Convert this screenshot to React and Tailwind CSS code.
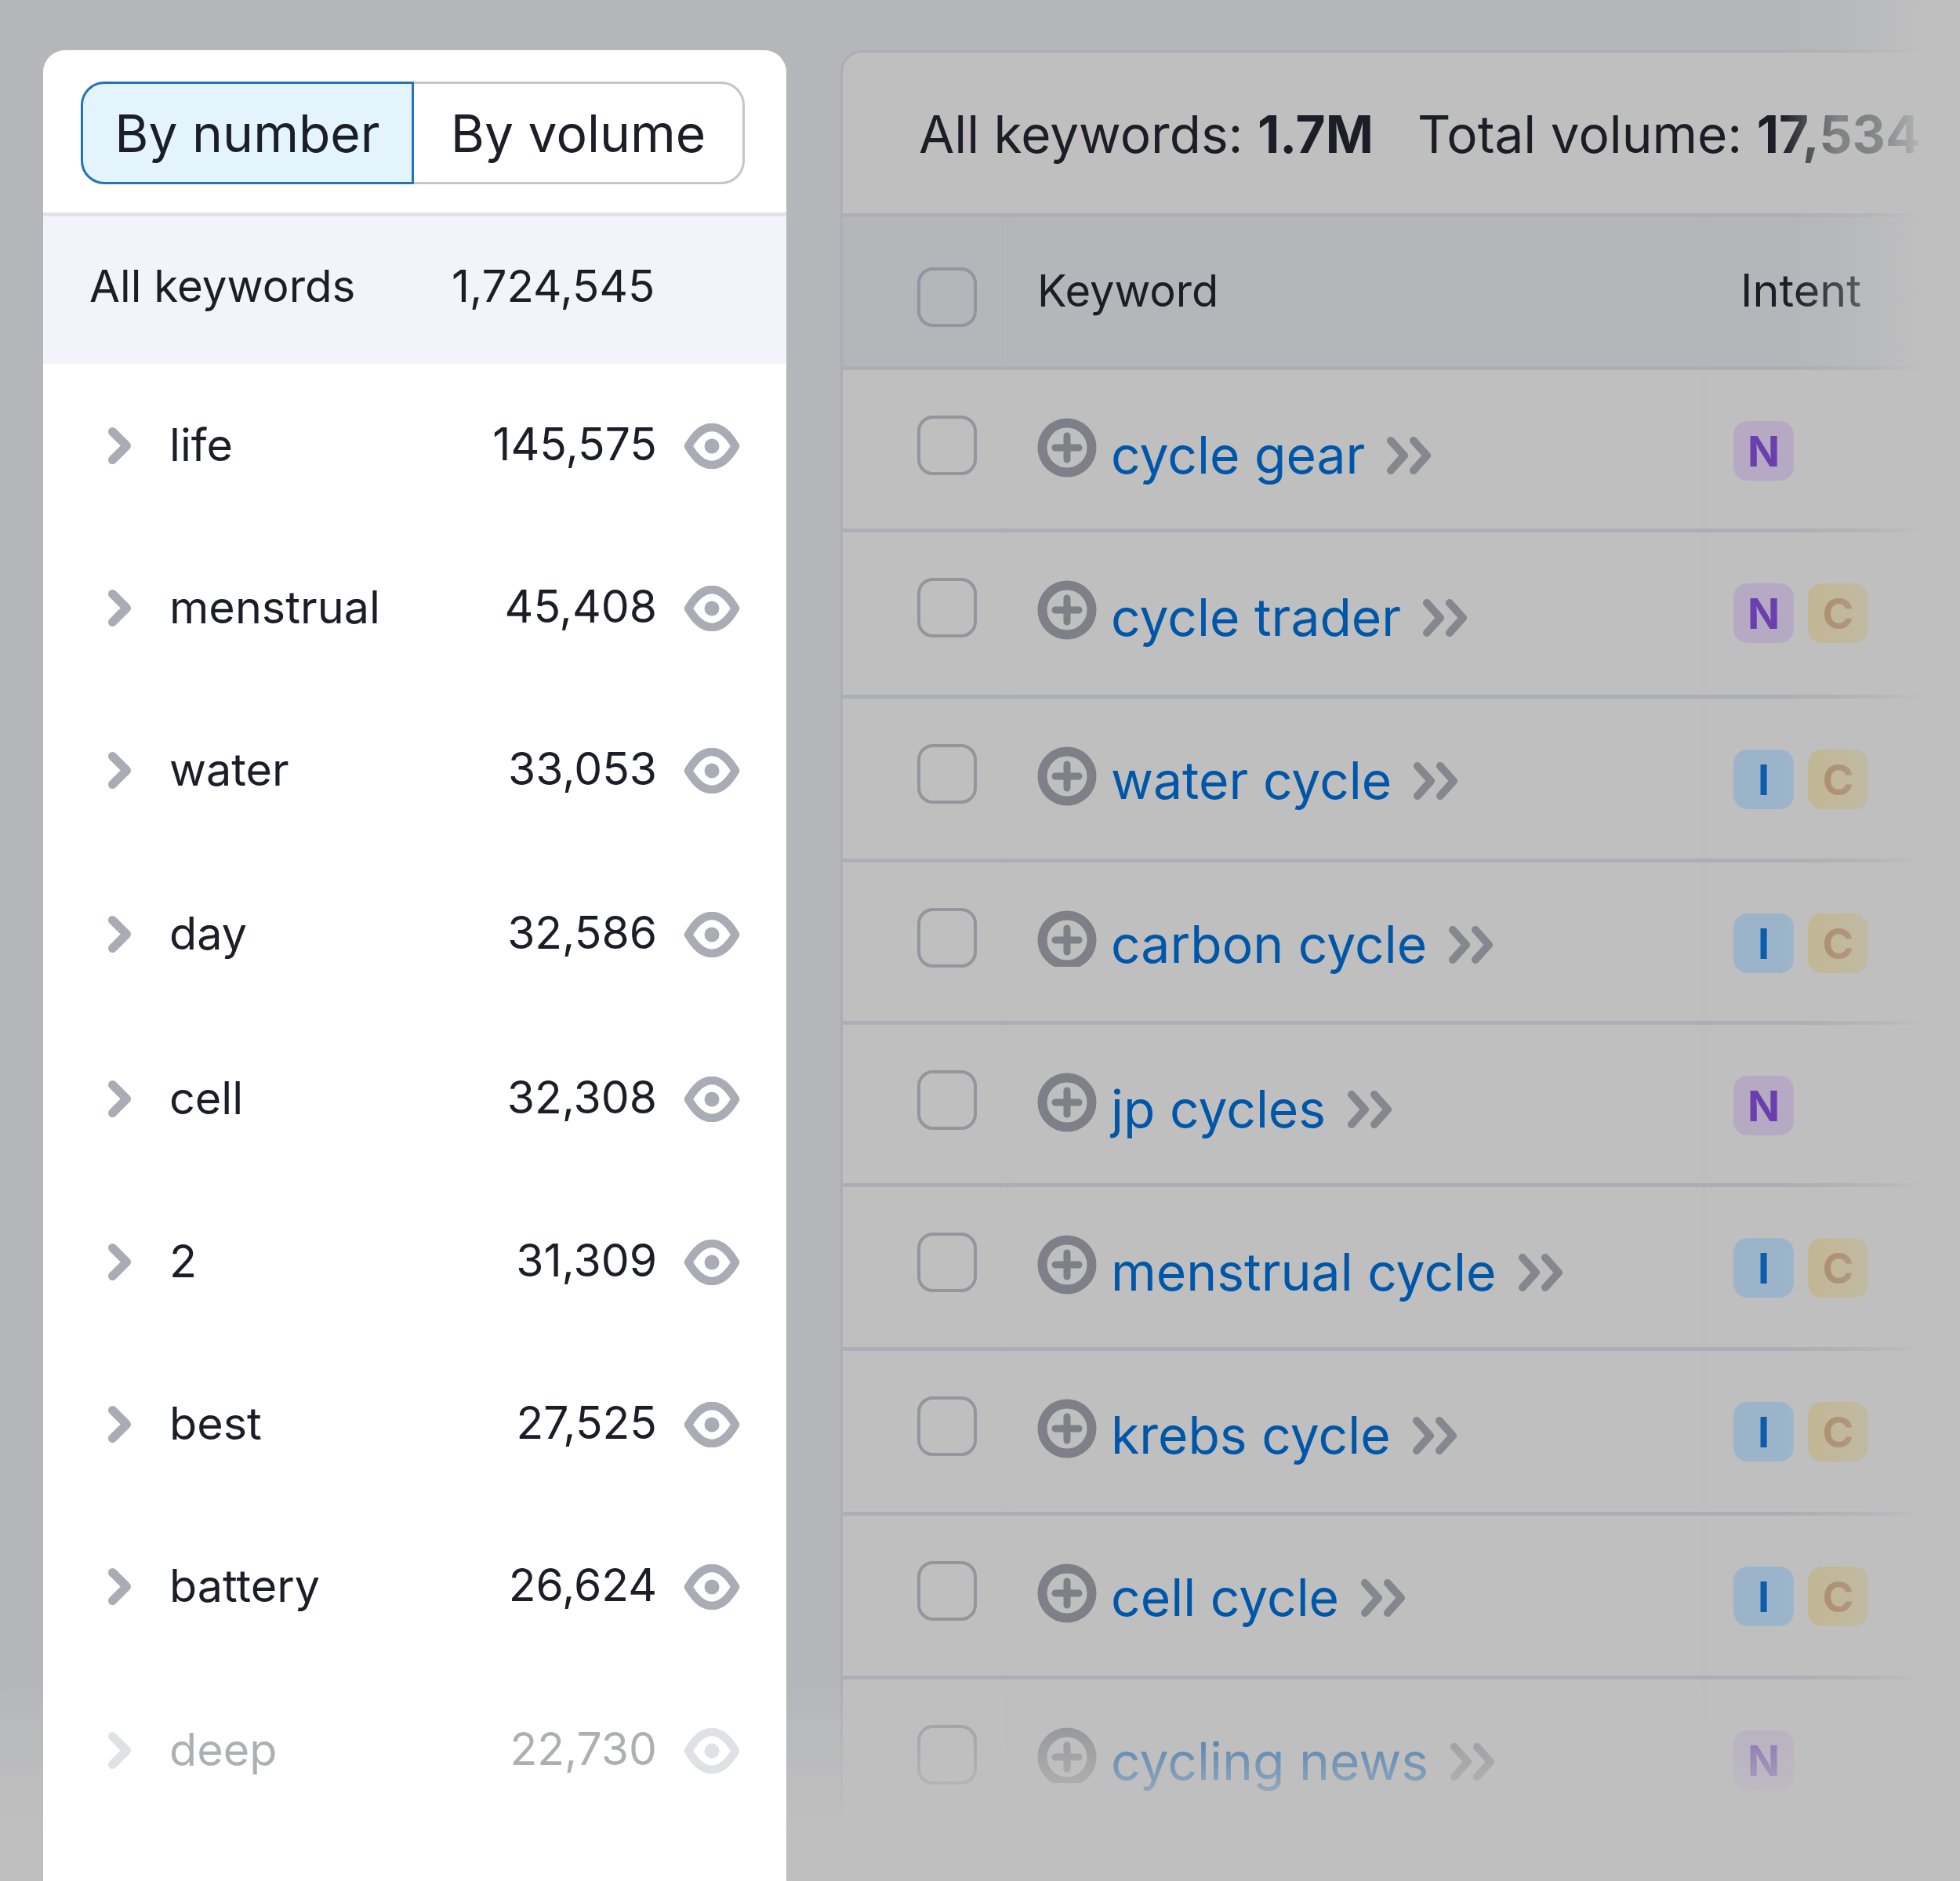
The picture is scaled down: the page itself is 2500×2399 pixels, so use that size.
const leftRows = [
  ["life", "145,575", "h-[207px]", ""],
  ["menstrual", "45,408", "h-[207px]", ""],
  ["water", "33,053", "h-[207px]", ""],
  ["day", "32,586", "h-[211px]", ""],
  ["cell", "32,308", "h-[209px]", ""],
  ["2", "31,309", "h-[207px]", ""],
  ["best", "27,525", "h-[207px]", ""],
  ["battery", "26,624", "h-[207px]", ""],
  ["deep", "22,730", "h-[211px]", "opacity-35"],
];

const rightRows = [
  ["cycle gear", ["N"], "h-[207px]", "", "mt-[2px]"],
  ["cycle trader", ["N", "C"], "h-[212px]", "", "mt-[2px]"],
  ["water cycle", ["I", "C"], "h-[209px]", "", "-mt-[2px]"],
  ["carbon cycle", ["I", "C"], "h-[207px]", "h-[72px]", "-mt-[2px]"],
  ["jp cycles", ["N"], "h-[207px]", "", "mt-[1px]"],
  ["menstrual cycle", ["I", "C"], "h-[209px]", "", "mt-[2px]"],
  ["krebs cycle", ["I", "C"], "h-[210px]", "", "mt-[1px]"],
  ["cell cycle", ["I", "C"], "h-[209px]", "", "-mt-[2px]"],
  ["cycling news", ["N"], "h-[200px]", "h-[71px]", "-mt-[2px]"],
];

const badgeStyles = {
  N: "bg-[#b5a9c3] text-[#6a3fae]",
  I: "bg-[#9cb4c9] text-[#0b5cab]",
  C: "bg-[#c2b68f] text-[#a98461]",
};

function Chevron() {
  return (
    <svg width="29" height="47" viewBox="0 0 29 47" fill="none" className="shrink-0">
      <path d="M5.5 5.5L23.5 23.5L5.5 41.5" stroke="#a9abb5" strokeWidth="11" strokeLinecap="round" strokeLinejoin="round" />
    </svg>
  );
}

function Eye() {
  return (
    <svg width="72" height="58" viewBox="0 0 72 58" fill="none" className="shrink-0">
      <path d="M6 29C16 12 25 5 36 5C47 5 56 12 66 29C56 46 47 53 36 53C25 53 16 46 6 29Z" stroke="#a9abb5" strokeWidth="10.5" strokeLinejoin="round" />
      <circle cx="36" cy="29" r="9.5" fill="#a9abb5" />
    </svg>
  );
}

function PlusCircle() {
  return (
    <svg width="76" height="76" viewBox="0 0 76 76" fill="none" className="shrink-0">
      <circle cx="38" cy="38" r="31.5" stroke="#7e7f87" strokeWidth="12" />
      <path d="M38 23V53M23 38H53" stroke="#7e7f87" strokeWidth="9" strokeLinecap="round" />
    </svg>
  );
}

function DoubleChevron() {
  return (
    <svg width="58" height="48" viewBox="0 0 58 48" fill="none" className="shrink-0">
      <path d="M5 5L22 24L5 43M34 5L51 24L34 43" stroke="#85868e" strokeWidth="10" strokeLinecap="round" strokeLinejoin="round" />
    </svg>
  );
}

function Checkbox() {
  return <div className="w-[76px] h-[76px] rounded-[20px] border-4 border-[#94959d] shrink-0" />;
}

export default function App() {
  return (
    <div className="relative w-[2500px] h-[2399px] overflow-hidden flex pl-[55px] pt-[64px] bg-[#b5b6ba] font-['Inter',sans-serif]">
      <div className="relative z-10 w-[948px] shrink-0 bg-white rounded-t-[28px] flex flex-col text-[#1b1e26]">
        <div className="h-[207px] shrink-0 pl-[48px] pt-[40px]">
          <div className="flex w-[847px] h-[131px] text-[66px]">
            <div className="w-[425px] flex items-center justify-center pt-[2px] border-[3px] border-[#2673b8] bg-[#e3f4fd] rounded-l-[30px]">By number</div>
            <div className="flex-1 flex items-center justify-center pt-[2px] border-[3px] border-l-0 border-[#c4c5ca] rounded-r-[30px]">By volume</div>
          </div>
        </div>
        <div className="h-[193px] shrink-0 border-t-[5px] border-[#e2e4ea] bg-[#f3f4f9] flex items-center pl-[59px] pb-[9px] text-[56.5px]">
          <span className="w-[462px]">All keywords</span>
          <span>1,724,545</span>
        </div>
        {leftRows.map(([name, num, h, op]) => (
          <div key={name} className={`${h} ${op} shrink-0 flex items-center pl-[83px]`}>
            <span className="mt-[2px]"><Chevron /></span>
            <span className="ml-[49px] flex-1 text-[57.5px] mb-[1px]">{name}</span>
            <span className="text-[57px] mb-[1px]">{num}</span>
            <span className="ml-[34px] mr-[59px] mt-[2px]"><Eye /></span>
          </div>
        ))}
      </div>

      <div className="ml-[69px] flex-1 bg-[#bfbfbf] rounded-tl-[28px] border-t-[3px] border-l-[3px] border-[#adaeb5] flex flex-col text-[#1b1e26]">
        <div className="h-[205px] shrink-0 flex items-center pl-[97px] pt-[3px] gap-[56px] text-[65.7px] whitespace-nowrap">
          <span>All keywords: <b>1.7M</b></span>
          <span>Total volume: <b>17,534</b></span>
        </div>
        <div className="h-[200px] shrink-0 border-y-[5px] border-[#adaeb5] bg-[#b5b6ba] flex">
          <div className="w-[211px] shrink-0 pl-[95px] pt-[64px] border-r border-[#b0b1b5]"><Checkbox /></div>
          <div className="w-[888px] shrink-0 pl-[37px] flex items-center text-[56px] pb-[2px] border-r border-[#b0b1b5]">Keyword</div>
          <div className="flex-1 pl-[46px] flex items-center text-[57.5px] pb-[3px]">Intent</div>
        </div>
        {rightRows.map(([kw, badges, h, clip, shift]) => (
          <div key={kw} className={`${h} shrink-0 border-b-[5px] border-[#adaeb5] flex last:border-b-0`}>
            <div className="w-[211px] shrink-0 pl-[95px] pt-[58px] border-r border-[#bababa]"><Checkbox /></div>
            <div className="w-[888px] shrink-0 pl-[37px] pt-[61px] flex items-start border-r border-[#bababa]">
              <span className={`block overflow-hidden ${clip}`}><PlusCircle /></span>
              <div className={`ml-[18px] flex items-start ${shift}`}>
                <span className="text-[66px] leading-[90px] text-[#0056a8] whitespace-nowrap">{kw}</span>
                <span className="ml-[28px] mt-[22px]"><DoubleChevron /></span>
              </div>
            </div>
            <div className="flex-1 pl-[37px] pt-[65px] flex items-start gap-[18px]">
              {badges.map((b) => (
                <div key={b} className={`w-[77px] h-[76px] rounded-[18px] flex items-center justify-center font-bold text-[54px] ${badgeStyles[b]}`}>{b}</div>
              ))}
            </div>
          </div>
        ))}
      </div>

      <div className="absolute top-0 bottom-0 left-[2280px] right-0 bg-gradient-to-r from-[#bfbfbf00] via-[#bfbfbf66] via-45% to-[#bfbfbf] to-80%" />
      <div className="absolute top-[120px] h-[110px] left-[2270px] w-[190px] bg-gradient-to-r from-[#bfbfbf00] via-[#bfbfbf80] via-40% to-[#bfbfbf00]" />
      <div className="absolute left-0 right-0 bottom-0 h-[259px] bg-gradient-to-b from-[#bfbfbf00] via-[#bfbfbf77] via-30% to-[#bfbfbf] to-75%" />
    </div>
  );
}
